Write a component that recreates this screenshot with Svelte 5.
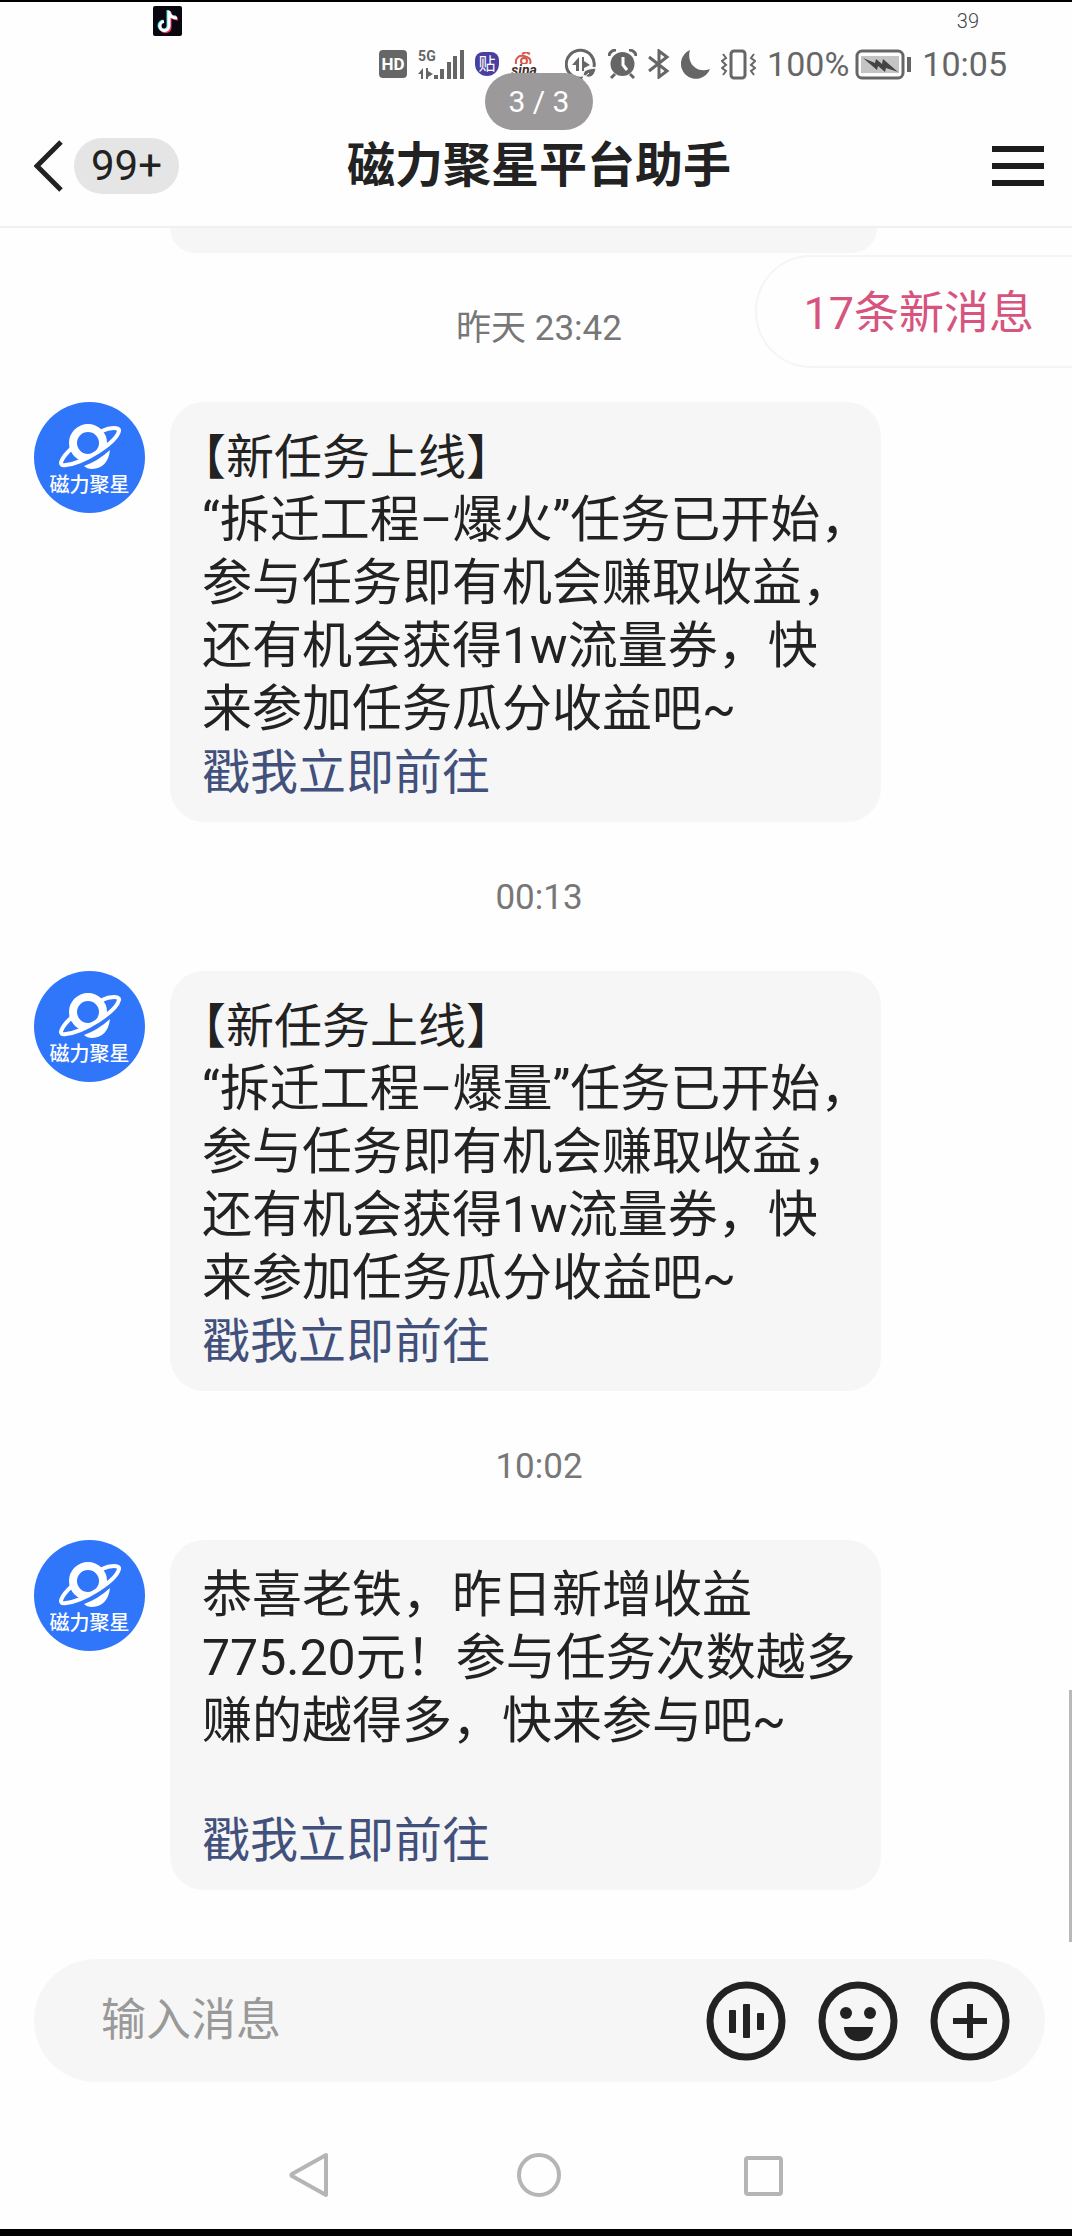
<script lang="ts">
	type Message = {
		time: string
		title?: string
		lines: string[]
		spaced?: boolean
	}

	const messages: Message[] = [
		{
			time: '昨天 23:42',
			title: '【新任务上线】',
			lines: [
				'“拆迁工程–爆火”任务已开始，',
				'参与任务即有机会赚取收益，',
				'还有机会获得1w流量券，快',
				'来参加任务瓜分收益吧~'
			]
		},
		{
			time: '00:13',
			title: '【新任务上线】',
			lines: [
				'“拆迁工程–爆量”任务已开始，',
				'参与任务即有机会赚取收益，',
				'还有机会获得1w流量券，快',
				'来参加任务瓜分收益吧~'
			]
		},
		{
			time: '10:02',
			lines: [
				'恭喜老铁，昨日新增收益',
				'775.20元！参与任务次数越多',
				'赚的越得多，快来参与吧~'
			],
			spaced: true
		}
	]

	let draft = ''
</script>

<div class="screen">
	<div class="overlay-bar">
		<svg class="note" viewBox="0 0 29 30" aria-hidden="true">
			<rect width="29" height="30" rx="2" fill="#0b0710" />
			<g fill="none" stroke-width="3">
				<path d="M15 4v15.500a4.500 4.500 0 1 1-5-4.500M15 5c1 4 4 6 8 6" stroke="#3be6e6" />
				<path d="M17 6v15a4.500 4.500 0 0 1-8 3M17 7c1 4 4 6 8 6" stroke="#f2355f" />
				<path d="M16 5v15a4.500 4.500 0 1 1-5-4.500M16 6c1 4 4 6 8 6" stroke="#fff" />
			</g>
		</svg>
		<span class="tiny">39</span>
	</div>

	<div class="status">
		<span class="hd">HD</span>
		<span class="network">
			<span class="gen">5G</span>
			<svg class="signal" viewBox="0 0 46 31" fill="#666" aria-hidden="true">
				<path d="M0 25l5-6v11H3v-5zM8 19h2v3l5 3-5 3v2H8z" />
				<path d="M16 26h4v4h-4zM22 20h4v10h-4zM29 13h4v17h-4zM35 7h4v23h-4zM42 1h4v29h-4z" />
			</svg>
		</span>
		<span class="tie">贴</span>
		<span class="sina">
			<svg viewBox="0 0 20 12" aria-hidden="true">
				<path d="M2 12C1 5 6 3 10 4s8 3 6 8" fill="none" stroke="#d8564c" stroke-width="2" />
				<circle cx="10" cy="9" r="3" fill="none" stroke="#d8564c" stroke-width="2" />
				<path d="M8 2l4-2 4 2" fill="none" stroke="#d8564c" stroke-width="2" />
			</svg>
			<span>sina</span>
		</span>
		<svg width="32" height="32" viewBox="0 0 32 32" aria-hidden="true">
			<path d="M29 19A14 14 0 1 0 18 30" fill="none" stroke="#666" stroke-width="3" />
			<path d="M7 17l7-8v14h-3v-6zM17 9h2v4l6 4-6 3v3h-2z" fill="#666" />
			<path d="M18 27c1-6 6-6 13-7-1 8-6 11-11 8zM17 31l7-6" fill="#666" stroke="#fff" />
		</svg>
		<svg width="29" height="30" viewBox="0 0 29 30" aria-hidden="true">
			<circle cx="14.500" cy="15" r="12" fill="#666" />
			<path d="M1 7c0-3 3-6 7-6M28 7c0-3-3-6-7-6M7 25l-4 4M22 25l4 4" fill="none" stroke="#666" stroke-width="3" />
			<path d="M15 8v8l4 5" fill="none" stroke="#fff" stroke-width="3" />
		</svg>
		<svg width="22" height="30" viewBox="0 0 22 30" fill="none" stroke="#666" stroke-width="3" aria-hidden="true">
			<path d="M1 8l18 14-8 6V2l8 6L1 22" />
		</svg>
		<svg width="29" height="30" viewBox="0 0 29 30" aria-hidden="true">
			<path d="M9 1A15 15 0 1 0 29 20C16 25 5 14 9 1z" fill="#666" />
		</svg>
		<svg width="35" height="31" viewBox="0 0 35 31" fill="none" stroke="#666" aria-hidden="true">
			<rect x="10" y="2" width="14" height="27" rx="3" stroke-width="3" />
			<path d="M2 5l3 4-4 3 4 4-4 3 4 3-3 4M33 5l-3 4 4 3-4 4 4 3-4 3 3 4" stroke-width="2" />
		</svg>
		<span class="battery">
			<span>100%</span>
			<svg width="56" height="31" viewBox="0 0 56 31" aria-hidden="true">
				<rect x="2" y="2" width="46" height="27" rx="5" fill="none" stroke="#666" stroke-width="3" />
				<rect x="6" y="7" width="38" height="17" fill="#c4c4c4" />
				<path d="M8 9l12 5 1-4 6 5 1-5 15 13-12-4-1 4-7-6-1 4z" fill="#444" />
				<path d="M52 8h4v15h-4z" fill="#666" />
			</svg>
		</span>
		<span>10:05</span>
	</div>
	<div class="pager">3 / 3</div>

	<header>
		<div class="left">
			<button class="back" aria-label="返回">
				<svg width="29" height="52" viewBox="0 0 29 52">
					<path d="M27 2L3 26l24 24" fill="none" stroke="#222" stroke-width="5" />
				</svg>
			</button>
			<span class="unread">99+</span>
		</div>
		<h1>磁力聚星平台助手</h1>
		<button class="menu" aria-label="菜单">
			<svg width="52" height="40" viewBox="0 0 52 40" fill="#1c1c1c">
				<path d="M0 0h52v6H0zM0 17h52v6H0zM0 34h52v6H0z" />
			</svg>
		</button>
	</header>

	<main>
		<button class="new-messages">17条新消息</button>
		<div class="previous"></div>
		{#each messages as message}
			<time>{message.time}</time>
			<article>
				<div class="avatar">
					<svg viewBox="0 0 111 73" fill="none" aria-hidden="true">
						<circle cx="54" cy="41" r="15" stroke="#fff" stroke-width="8" />
						<path d="M36 67C54 62 78 49 88 34" stroke="#2f76fa" stroke-width="9" />
						<path d="M38 46C27 56 23 65 32 63C50 61 82 41 85 29C86 25 76 25 68 29" stroke="#fff" stroke-width="4" />
						<path d="M50 64Q64 59 76 48Q74 66 58 67Q53 67 50 64z" fill="#fff" />
					</svg>
					<span>磁力聚星</span>
				</div>
				<div class="bubble">
					{#if message.title}
						<p class="title">{message.title}</p>
					{/if}
					{#each message.lines as line}
						<p>{line}</p>
					{/each}
					<a href="#task" class:spaced={message.spaced}>戳我立即前往</a>
				</div>
			</article>
		{/each}
		<div class="scrollbar"></div>
	</main>

	<form class="composer" on:submit|preventDefault>
		<input type="text" placeholder="输入消息" aria-label="输入消息" bind:value={draft} />
		<button type="button" aria-label="语音">
			<svg width="80" height="80" viewBox="0 0 80 80">
				<circle cx="40" cy="40" r="36" fill="none" stroke="#222" stroke-width="7" />
				<g fill="#222">
					<rect x="23" y="29" width="7" height="23" rx="1" />
					<rect x="37" y="23" width="7" height="34" rx="1" />
					<rect x="51" y="32" width="7" height="17" rx="1" />
				</g>
			</svg>
		</button>
		<button type="button" aria-label="表情">
			<svg width="80" height="80" viewBox="0 0 80 80">
				<circle cx="40" cy="40" r="36" fill="none" stroke="#222" stroke-width="7" />
				<g fill="#222">
					<circle cx="28" cy="32" r="6" />
					<circle cx="52" cy="32" r="6" />
					<path d="M26 46h29c0 19-29 19-29 0z" />
				</g>
			</svg>
		</button>
		<button type="button" aria-label="更多">
			<svg width="80" height="80" viewBox="0 0 80 80">
				<circle cx="40" cy="40" r="36" fill="none" stroke="#222" stroke-width="7" />
				<path d="M23 40h34M40 23v34" stroke="#222" stroke-width="6" />
			</svg>
		</button>
	</form>

	<nav>
		<button aria-label="系统返回">
			<svg width="44" height="46" viewBox="0 0 44 46">
				<path d="M37 3v40L3 24q-1-1 0-2z" />
			</svg>
		</button>
		<button aria-label="主页">
			<svg width="44" height="46" viewBox="0 0 44 46">
				<circle cx="22" cy="23" r="20" />
			</svg>
		</button>
		<button aria-label="最近任务">
			<svg width="39" height="46" viewBox="0 0 39 46">
				<rect x="2" y="6" width="35" height="36" rx="2" />
			</svg>
		</button>
	</nav>
</div>

<style>
	:global(body) {
		background: #fefefe;
	}

	.screen {
		position: relative;
		border-top: 2px solid #000;
		border-bottom: 7px solid #000;
		overflow: hidden;
		background: #fefefe;
		color: #222;
		font-family: Roboto, "Noto Sans CJK SC", sans-serif;
	}

	button {
		display: block;
		border: none;
		padding: 0;
		background: none;
		color: inherit;
		font-family: inherit;
		cursor: pointer;
	}

	svg {
		display: block;
		flex: none;
	}

	.overlay-bar {
		display: flex;
		justify-content: space-between;
		box-sizing: border-box;
		height: 36px;
		padding: 4px 93px 0 153px;
	}

	.note {
		width: 29px;
		height: 30px;
	}

	.tiny {
		color: #444;
		font-size: 20px;
		font-weight: 300;
		line-height: 30px;
	}

	.status {
		display: flex;
		justify-content: flex-end;
		align-items: center;
		gap: 11px;
		height: 52px;
		padding-right: 65px;
		color: #666;
		font-size: 34px;
	}

	.hd {
		width: 28px;
		border-radius: 4px;
		background: #666;
		color: #fff;
		font-size: 17px;
		font-weight: 700;
		line-height: 28px;
		text-align: center;
	}

	.network {
		position: relative;
	}

	.signal {
		width: 46px;
		height: 31px;
	}

	.gen {
		position: absolute;
		top: 0;
		left: 0;
		font-size: 14px;
		font-weight: 700;
		line-height: 14px;
	}

	.tie {
		width: 24px;
		border-radius: 8px 8px 12px 12px;
		background: #4a3f9f;
		color: #fff;
		font-size: 17px;
		line-height: 24px;
		text-align: center;
	}

	.sina {
		display: flex;
		flex-direction: column;
		align-items: center;
		width: 28px;
		margin-right: 16px;
		color: #43302c;
		font-size: 14px;
		font-style: italic;
		font-weight: 700;
		line-height: 12px;
	}

	.sina svg {
		width: 20px;
		height: 12px;
	}

	.battery {
		display: flex;
		align-items: center;
		gap: 6px;
	}

	.pager {
		position: absolute;
		top: 71px;
		right: 0;
		left: 6px;
		width: 108px;
		margin: 0 auto;
		border-radius: 29px;
		background: #9b999a;
		color: #fff;
		font-size: 30px;
		line-height: 57px;
		text-align: center;
	}

	header {
		display: grid;
		grid-template-columns: 1fr auto 1fr;
		align-items: center;
		box-sizing: border-box;
		height: 138px;
		padding: 16px 28px 0 34px;
		border-bottom: 2px solid #f0f0f0;
	}

	.left {
		display: flex;
		align-items: center;
		gap: 11px;
	}

	.unread {
		width: 105px;
		border-radius: 28px;
		background: #e5e5e5;
		font-size: 42px;
		line-height: 56px;
		text-align: center;
	}

	h1 {
		margin: 0;
		font-size: 48px;
		font-weight: 700;
		line-height: 64px;
	}

	.menu {
		justify-self: end;
	}

	main {
		position: relative;
	}

	.previous {
		height: 25px;
		margin: 0 195px 0 170px;
		border-radius: 0 0 34px 34px;
		background: #f6f6f6;
	}

	.new-messages {
		position: absolute;
		top: 27px;
		right: 0;
		height: 113px;
		padding: 0 38px 4px 46px;
		border: 2px solid #f6f4f5;
		border-right: none;
		border-radius: 56px 0 0 56px;
		background: #fefefe;
		color: #d6547e;
		font-size: 45px;
	}

	time {
		display: block;
		padding: 55px 28px 53px 34px;
		color: #777;
		font-size: 35px;
		line-height: 41px;
		text-align: center;
	}

	article {
		display: flex;
		align-items: flex-start;
		gap: 25px;
		padding: 0 191px 0 34px;
	}

	.avatar {
		flex: none;
		width: 111px;
		height: 111px;
		border-radius: 50%;
		background: #2f76fa;
		color: #fff;
		font-size: 20px;
		font-weight: 500;
		line-height: 20px;
		text-align: center;
	}

	.avatar svg {
		width: 111px;
		height: 73px;
	}

	.bubble {
		flex: 1;
		padding: 24px 0 18px 32px;
		border-radius: 34px;
		background: #f6f6f6;
		font-size: 50px;
		line-height: 63px;
		white-space: nowrap;
	}

	.bubble p {
		margin: 0;
	}

	/* half-width brackets, so the title starts flush with the text below */
	.bubble .title {
		font-size: 48px;
		font-feature-settings: "halt";
	}

	.bubble a {
		display: block;
		color: #42507c;
		font-size: 48px;
		text-decoration: none;
	}

	.bubble a.spaced {
		margin-top: 56px;
	}

	.scrollbar {
		position: absolute;
		right: 0;
		bottom: -52px;
		width: 3px;
		height: 252px;
		background: #b9b9b9;
	}

	.composer {
		display: flex;
		align-items: center;
		gap: 32px;
		box-sizing: border-box;
		height: 123px;
		margin: 69px 27px 0 34px;
		padding: 0 35px 0 67px;
		border-radius: 62px;
		background: #f6f6f6;
	}

	.composer input {
		flex: 1;
		min-width: 0;
		border: none;
		padding: 0;
		outline: none;
		background: none;
		color: #222;
		font-family: inherit;
		font-size: 45px;
	}

	.composer input::placeholder {
		color: #999;
	}

	nav {
		display: flex;
		justify-content: space-between;
		align-items: center;
		box-sizing: border-box;
		height: 147px;
		padding: 38px 27% 0 27%;
	}

	nav svg {
		fill: none;
		stroke: #b5b5b5;
		stroke-width: 4px;
		stroke-linejoin: round;
	}
</style>
